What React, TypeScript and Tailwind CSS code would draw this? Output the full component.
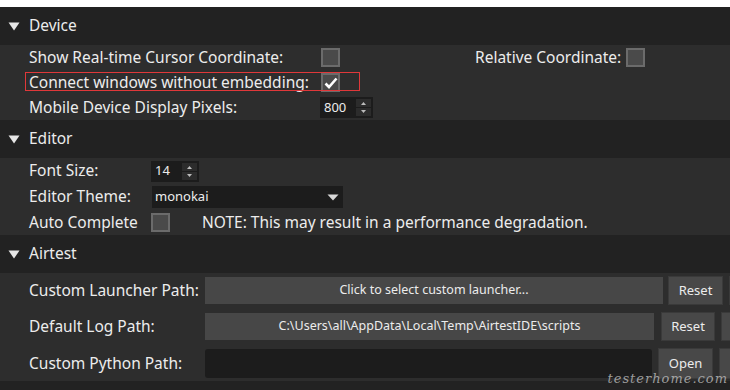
import type { ReactNode } from "react";

const FONT = "font-['Microsoft_YaHei','Noto_Sans','Open_Sans',sans-serif]";

function SectionHeader({ title }: { title: string }) {
  return (
    <div className="flex h-[38px] items-center bg-[#222222]">
      <svg width="12" height="9" viewBox="0 0 12 9" className="ml-[8px]">
        <path d="M0.5 0.5 L11.5 0.5 L6 8.5 Z" fill="#e6e6e6" />
      </svg>
      <span className="ml-[9px] text-[15.5px] text-[#ececec]">{title}</span>
    </div>
  );
}

function CheckBox({ checked }: { checked?: boolean }) {
  return (
    <span className="flex h-[19px] w-[19px] items-center justify-center border-2 border-[#6b6b6b] bg-[#4a4a4a]">
      {checked && (
        <svg width="14" height="12" viewBox="0 0 14 12">
          <path d="M1.5 6.5 L5 10 L12.5 1.5" stroke="#ffffff" strokeWidth="2.6" fill="none" />
        </svg>
      )}
    </span>
  );
}

function SpinBox({ value, width }: { value: string; width: string }) {
  return (
    <span className={`flex h-[21px] items-center justify-between bg-[#1c1c1c] pl-[4px] pr-[2px] ${width}`}>
      <span className="text-[13px] text-[#ececec]">{value}</span>
      <span className="flex h-[17px] w-[15px] flex-col bg-[#2c2c2c]">
        <svg width="15" height="8" viewBox="0 0 15 8">
          <path d="M5 6 L10 6 L7.5 3 Z" fill="#bcbcbc" />
        </svg>
        <span className="h-px bg-[#1c1c1c]" />
        <svg width="15" height="8" viewBox="0 0 15 8">
          <path d="M5 2 L10 2 L7.5 5 Z" fill="#bcbcbc" />
        </svg>
      </span>
    </span>
  );
}

function Row({ h, children }: { h: string; children: ReactNode }) {
  return <div className={`flex items-center pl-[29px] ${h}`}>{children}</div>;
}

function Btn({ label, w }: { label: string; w: string }) {
  return (
    <span className={`flex h-full shrink-0 items-center justify-center border border-[#3a3a3a] bg-[#484848] text-[13px] text-[#ececec] ${w}`}>
      {label}
    </span>
  );
}

export default function App() {
  return (
    <div className={`relative h-[390px] w-[730px] overflow-hidden bg-[#222222] text-[15.5px] text-[#ececec] ${FONT}`}>
      <div className="h-[7px] bg-white" />

      <SectionHeader title="Device" />
      <div className="h-[75px] bg-[#2d2d2d]">
        <Row h="h-[25px]">
          <span className="w-[292px]">Show Real-time Cursor Coordinate:</span>
          <CheckBox />
          <span className="ml-[135px] mr-[5px]">Relative Coordinate:</span>
          <CheckBox />
        </Row>
        <Row h="h-[25px]">
          <span className="relative w-[292px]">
            Connect windows without embedding:
            <span className="pointer-events-none absolute left-[-4px] top-[1px] h-[19px] w-[335px] border border-[#e0383a]" />
          </span>
          <CheckBox checked />
        </Row>
        <Row h="h-[25px]">
          <span className="w-[291px]">Mobile Device Display Pixels:</span>
          <SpinBox value="800" width="w-[53px]" />
        </Row>
      </div>

      <SectionHeader title="Editor" />
      <div className="h-[77px] bg-[#2d2d2d]">
        <Row h="h-[26px]">
          <span className="w-[122px]">Font Size:</span>
          <SpinBox value="14" width="w-[48px]" />
        </Row>
        <Row h="h-[26px]">
          <span className="w-[123px]">Editor Theme:</span>
          <span className="flex h-[22px] w-[191px] items-center justify-between bg-[#1c1c1c] pl-[3px] pr-[4px] text-[13px]">
            monokai
            <svg width="12" height="7" viewBox="0 0 12 7">
              <path d="M0.5 0.5 L11.5 0.5 L6 6.5 Z" fill="#d8d8d8" />
            </svg>
          </span>
        </Row>
        <Row h="h-[25px]">
          <span className="w-[122px]">Auto Complete</span>
          <CheckBox />
          <span className="ml-[32px]">NOTE: This may result in a performance degradation.</span>
        </Row>
      </div>

      <SectionHeader title="Airtest" />
      <div className="flex h-[108px] flex-col gap-[9px] bg-[#2d2d2d] pt-[4px]">
        <Row h="h-[27px]">
          <span className="w-[176px] shrink-0">Custom Launcher Path:</span>
          <span className="flex h-full w-[458px] shrink-0 items-center justify-center bg-[#474747] text-[12.5px]">
            Click to select custom launcher...
          </span>
          <span className="ml-[5px] flex h-[29px] gap-[6px]">
            <Btn label="Reset" w="w-[55px]" />
            <Btn label="" w="w-[55px]" />
          </span>
        </Row>
        <Row h="h-[27px]">
          <span className="w-[176px] shrink-0">Default Log Path:</span>
          <span className="flex h-full w-[449px] shrink-0 items-center justify-center bg-[#474747] text-[12.5px]">
            C:\Users\all\AppData\Local\Temp\AirtestIDE\scripts
          </span>
          <span className="ml-[7px] flex h-[29px] gap-[6px]">
            <Btn label="Reset" w="w-[54px]" />
            <Btn label="" w="w-[55px]" />
          </span>
        </Row>
        <Row h="h-[29px]">
          <span className="w-[176px] shrink-0">Custom Python Path:</span>
          <span className="h-full w-[447px] shrink-0 rounded-[3px] bg-[#1c1c1c]" />
          <span className="ml-[6px] flex h-[31px] gap-[6px]">
            <Btn label="Open" w="w-[55px]" />
            <Btn label="" w="w-[55px]" />
          </span>
        </Row>
      </div>

      <span className="pointer-events-none absolute bottom-[5px] right-[2px] font-['DejaVu_Serif',serif] text-[13px] italic leading-none tracking-[1px] text-[#bdbdbd]/80">
        testerhome.com
      </span>
    </div>
  );
}
